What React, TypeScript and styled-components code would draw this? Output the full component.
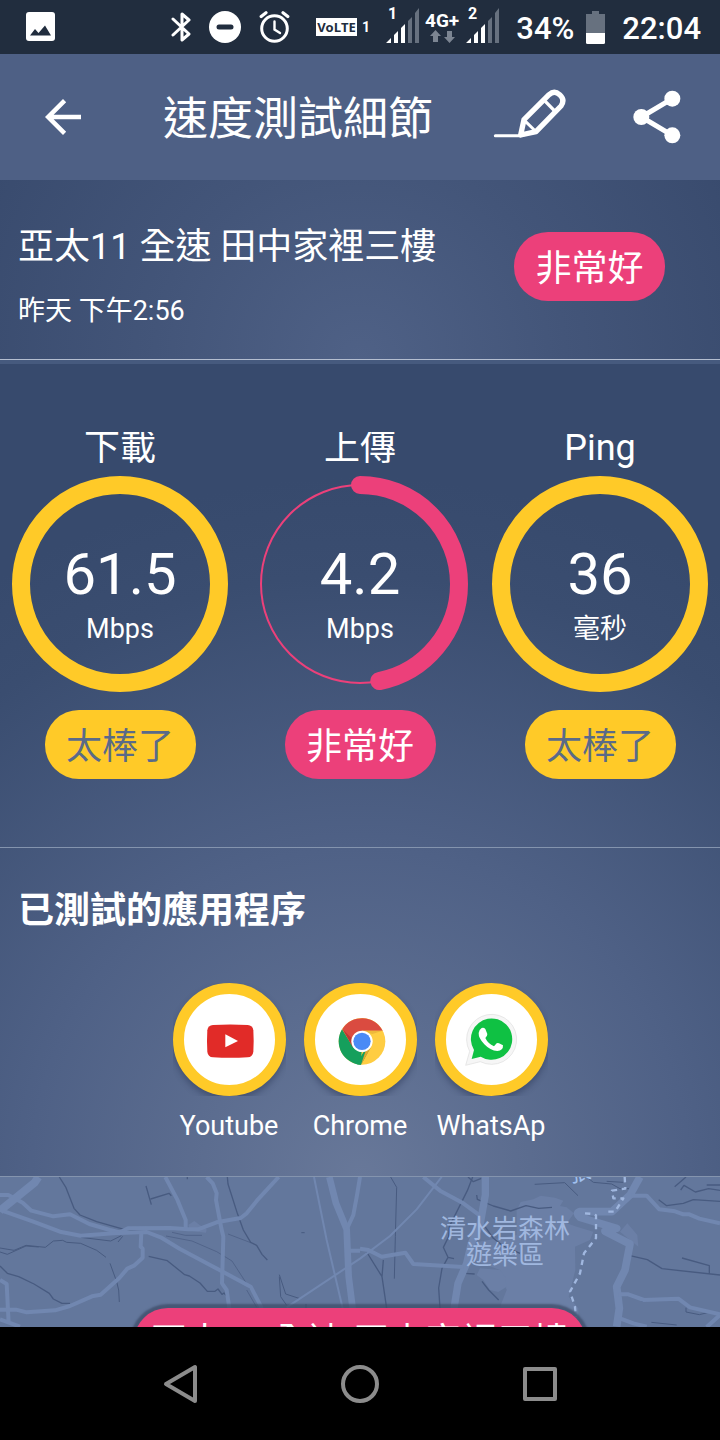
import React from 'react';
import styled, { createGlobalStyle } from 'styled-components';

const YELLOW = '#ffca28';
const PINK = '#ec407a';
const HAIRLINE = '#8494ae';

const GlobalStyle = createGlobalStyle`
  *, *::before, *::after { box-sizing: border-box; }
  body {
    margin: 0;
    background: #000;
    color: #fff;
    font-family: Roboto, "Noto Sans CJK TC", sans-serif;
  }
  h1, h2, h3, p, ul { margin: 0; padding: 0; font-weight: 400; }
  ul { list-style: none; }
  svg { display: block; }
`;

const Screen = styled.div`
  min-height: 100vh;
  display: flex;
  flex-direction: column;
`;

/* ---------- status bar ---------- */

const StatusBar = styled.div`
  height: 54px;
  padding: 0 19px 0 26px;
  display: flex;
  align-items: center;
  justify-content: space-between;
  background: #212d3e;
`;

const StatusGroup = styled.div<{ $gap: number }>`
  display: flex;
  align-items: center;
  gap: ${(p) => p.$gap}px;
`;

const StatusText = styled.span`
  padding-top: 3px;
  font-size: 31px;
  font-weight: 500;
  line-height: 36px;
`;

/* ---------- app bar ---------- */

const AppBar = styled.header`
  height: 126px;
  padding: 0 39px 0 36px;
  display: flex;
  align-items: center;
  background: #4e6085;
`;

const IconButton = styled.button`
  padding: 0;
  border: 0;
  background: none;
  color: inherit;
  cursor: pointer;
`;

const Title = styled.h1`
  flex: 1;
  padding: 6px 0 0 73px;
  font-size: 45px;
  line-height: 54px;
  white-space: nowrap;
`;

const Actions = styled.div`
  display: flex;
  gap: 66px;
`;

/* ---------- summary ---------- */

const Summary = styled.section`
  padding: 46px 55px 32px 18px;
  display: flex;
  align-items: flex-start;
  justify-content: space-between;
  border-bottom: 1px solid #b4bed0;
  background: radial-gradient(circle 410px at 50% 100%, #4f6186, #435579 50%, #394b6e);
`;

const SummaryText = styled.div`
  display: flex;
  flex-direction: column;
  gap: 27px;
`;

const TestName = styled.h2`
  font-size: 36px;
  line-height: 42px;
`;

const TestTime = styled.p`
  font-size: 27px;
  line-height: 32px;
`;

const Badge = styled.span<{ $tone: 'great' | 'good' }>`
  width: 151px;
  height: 69px;
  padding-top: 4px;
  display: flex;
  align-items: center;
  justify-content: center;
  border-radius: 34px;
  font-size: 36px;
  line-height: 42px;
  background: ${(p) => (p.$tone === 'great' ? YELLOW : PINK)};
  color: ${(p) => (p.$tone === 'great' ? '#5a6a88' : '#fff')};
`;

const BadgeSlot = styled.div`
  padding-top: 6px;
`;

/* ---------- results and tested apps ---------- */

const Panels = styled.div`
  border-top: 4px solid #465a7e;
  background: radial-gradient(
    circle 700px at 50% 100%,
    #687899,
    #4f6186 47%,
    #3a4d70 86%,
    #374a6d
  );
`;

const Results = styled.section`
  padding: 68px 0;
  display: grid;
  grid-template-columns: repeat(3, 1fr);
  border-bottom: 1px solid ${HAIRLINE};
`;

const Result = styled.div`
  display: flex;
  flex-direction: column;
  align-items: center;
`;

const ResultLabel = styled.h3`
  height: 32px;
  font-size: 36px;
  line-height: 32px;
  clip-path: inset(0 0 -10px);
`;

const Gauge = styled.div`
  margin: 12px 0 18px;
  display: grid;
  justify-items: center;

  > * { grid-area: 1 / 1; }
`;

const Reading = styled.div`
  padding-top: 68px;
  display: flex;
  flex-direction: column;
  align-items: center;
  gap: 9px;
`;

const Value = styled.span`
  font-size: 58px;
  line-height: 60px;
`;

const Unit = styled.span`
  font-size: 27px;
  line-height: 32px;
`;

const Apps = styled.section`
  padding: 38px 0 34px;
  border-bottom: 1px solid ${HAIRLINE};
`;

const AppsTitle = styled.h2`
  padding-left: 18px;
  font-size: 36px;
  font-weight: 700;
  line-height: 50px;
`;

const AppList = styled.ul`
  padding-top: 47px;
  display: flex;
  justify-content: center;
  gap: 18px;
`;

const AppItem = styled.li`
  width: 113px;
  display: flex;
  flex-direction: column;
  align-items: center;
  gap: 14px;
`;

const AppDiscArea = styled.div`
  overflow: hidden;
`;

const AppDisc = styled.div`
  width: 113px;
  height: 113px;
  display: grid;
  place-items: center;
  border: 11px solid ${YELLOW};
  border-radius: 50%;
  background: #fff;
  box-shadow: 0 4px 6px rgba(30, 40, 70, 0.4);
`;

const AppName = styled.span`
  font-size: 27px;
  line-height: 32px;
  white-space: nowrap;
`;

/* ---------- map ---------- */

const MapView = styled.section`
  position: relative;
  flex: 1 0 150px;
  overflow: hidden;
  background: #63779c;
`;

const MapDrawing = styled.svg`
  position: absolute;
  inset: 0;
  width: 100%;
  height: 100%;
`;

const PlaceName = styled.p`
  position: absolute;
  top: 39px;
  left: 505px;
  transform: translateX(-50%);
  color: #a0b7df;
  font-size: 26px;
  line-height: 26px;
  text-align: center;
  white-space: nowrap;
`;

const MapPin = styled.div`
  position: absolute;
  top: 131px;
  left: 50%;
  transform: translateX(-50%);
  height: 69px;
  padding: 13px 17px;
  border-radius: 34px;
  background: ${PINK};
  box-shadow: 0 0 2px 4px rgba(62, 76, 104, 0.75);
  font-size: 36px;
  line-height: 42px;
  white-space: nowrap;
`;

/* ---------- navigation bar ---------- */

const NavBar = styled.nav`
  height: 113px;
  padding: 0 12.5%;
  display: grid;
  grid-template-columns: repeat(3, 1fr);
  place-items: center;
  background: #000;
`;

/* ---------- drawings ---------- */

const PictureIcon = () => (
  <svg width="30" height="30" viewBox="0 0 30 30">
    <rect x="0" y="0" width="29" height="29" rx="3" fill="#fff" />
    <path d="M4 23.500 9 17l3.500 4 6.500-7.500L25 23.500z" fill="#212d3e" />
  </svg>
);

const BluetoothIcon = () => (
  <svg width="20" height="32" viewBox="0 0 20 32" fill="none" stroke="#fff" strokeWidth="3">
    <path d="M2 8 18 23 11 29V3l7 6L2 24" strokeLinejoin="round" strokeLinecap="round" />
  </svg>
);

const DoNotDisturbIcon = () => (
  <svg width="32" height="32" viewBox="0 0 32 32">
    <circle cx="16" cy="16" r="16" fill="#fff" />
    <rect x="7.500" y="13.500" width="17" height="5" rx="2.500" fill="#212d3e" />
  </svg>
);

const AlarmIcon = () => (
  <svg width="31" height="32" viewBox="0 0 31 32" fill="none" stroke="#fff" strokeLinecap="round">
    <circle cx="15.500" cy="17.500" r="12.800" strokeWidth="3" />
    <path d="M15.500 10.500v8l5.500 3.500" strokeWidth="2.400" />
    <path d="M2.200 5.500 7 1.800M28.800 5.500 24 1.800" strokeWidth="3.200" />
  </svg>
);

const VolteIcon = () => (
  <svg width="53" height="20" viewBox="0 0 53 20">
    <rect x="0" y="1" width="41" height="18" fill="#fff" />
    <text x="20.500" y="15" textAnchor="middle" fontFamily="Open Sans" fontWeight="700" fontSize="13" fill="#212d3e">
      VoLTE
    </text>
    <text x="46" y="15" fontFamily="Roboto" fontWeight="700" fontSize="14" fill="#fff">
      1
    </text>
  </svg>
);

const SignalIcon = ({ sim }: { sim: string }) => (
  <svg width="33" height="38" viewBox="0 0 33 38" overflow="visible">
    <text x="2" y="11" fontFamily="Roboto" fontWeight="700" fontSize="16" fill="#fff">
      {sim}
    </text>
    <path d="M0 35 5 30v5zM8 27l4-4v12H8zM15 20l4-4v19h-4z" fill="#fff" />
    <path d="M22 13l4-4v26h-4zM29 5l4-5v35h-4z" fill="#67717f" />
  </svg>
);

const NetworkIcon = () => (
  <svg width="35" height="38" viewBox="0 0 35 38">
    <text x="0" y="19" fontFamily="Roboto" fontWeight="700" fontSize="19" fill="#fff">
      4G+
    </text>
    <path
      d="M10.500 22l5.500 6H13v6H8v-6H5zM24.500 35l-5.500-6h3v-6h5v6h3z"
      fill="#7c8592"
    />
  </svg>
);

const BatteryIcon = () => (
  <svg width="19" height="33" viewBox="0 0 19 33">
    <path d="M6 0h7v3h6v20H0V3h6z" fill="#67717f" />
    <path d="M0 22h19v9.500q0 1.500-1.500 1.500h-16Q0 33 0 31.500z" fill="#fff" />
  </svg>
);

const BackArrow = () => (
  <svg width="54" height="54" viewBox="0 0 24 24" fill="#fff">
    <path d="M20 11H7.830l5.590-5.590L12 4l-8 8 8 8 1.410-1.410L7.830 13H20z" />
  </svg>
);

const PencilIcon = () => (
  <svg width="74" height="58" viewBox="39 36 222 174" fill="none" stroke="#fff" strokeLinejoin="round" strokeLinecap="round">
    <path d="M46 179H122" strokeWidth="9" />
    <path d="M122 177 132 131 207 56Q223 42 239 56 256 72 243 90L168 167z" strokeWidth="16" />
    <path d="M193 73 223 104" strokeWidth="10" />
    <path d="M134 134 166 165" strokeWidth="9" />
    <path d="M120 180 124 162 140 177z" fill="#fff" strokeWidth="3" />
  </svg>
);

const ShareIcon = () => (
  <svg width="48" height="54" viewBox="459 42 144 162">
    <path d="M577 68 484 123 577 178" fill="none" stroke="#fff" strokeWidth="15" />
    <g fill="#fff">
      <circle cx="577" cy="68" r="24" />
      <circle cx="484" cy="123" r="24" />
      <circle cx="577" cy="178" r="24" />
    </g>
  </svg>
);

const GaugeRing = ({ color, share }: { color: string; share: number }) => {
  const length = 2 * Math.PI * 99;
  return (
    <svg width="216" height="216" viewBox="0 0 216 216" fill="none" stroke={color}>
      <circle cx="108" cy="108" r="99" strokeWidth="2" />
      <circle
        cx="108"
        cy="108"
        r="99"
        strokeWidth="18"
        strokeLinecap="round"
        strokeDasharray={`${length * share} ${length}`}
        transform="rotate(-90 108 108)"
      />
    </svg>
  );
};

const YoutubeLogo = () => (
  <svg width="56" height="56" viewBox="122 124 168 168">
    <path
      d="M158 163Q210 160 262 163 277 164 279 179 281 211 279 243 277 259 262 260 210 263 158 260 143 259 141 243 139 211 141 179 143 164 158 163z"
      fill="#e12b28"
    />
    <path d="M195 191 233 211 195 230z" fill="#fff" />
  </svg>
);

const ChromeLogo = () => (
  <svg width="56" height="56" viewBox="515 124 168 168">
    <circle cx="605" cy="212" r="70" fill="#ffcd42" />
    <path d="M605 212 602 282A70 70 0 0 1 545 176L578 228z" fill="#159f5c" />
    <path d="M605 212 578 228 632 228 602 282Q592 282 588 280L612 240z" fill="#159f5c" />
    <path d="M605 180H667A70 70 0 0 0 546 175L577 229 605 212z" fill="#da4b40" />
    <path d="M546 175 575 224 573 202z" fill="#b63b34" />
    <path d="M602 282 633 228 616 240z" fill="#e2a62f" />
    <path d="M605 180H667L636 190z" fill="#eeb93b" />
    <circle cx="605" cy="212" r="32" fill="#fff" />
    <circle cx="605" cy="212" r="26" fill="#4a8af5" />
  </svg>
);

const WhatsAppLogo = () => (
  <svg width="56" height="56" viewBox="910 124 168 168">
    <path
      d="M918 284 930 242A75 75 0 1 1 962 273z"
      fill="#f6f6f6"
      stroke="#dedede"
      strokeWidth="2"
      strokeLinejoin="round"
    />
    <path d="M936 265 943 238A62 62 0 1 1 963 258z" fill="#0fc143" />
    <path
      d="M966 172Q972 169 977 175L983 190Q984 195 977 202 985 219 1003 227L1011 218Q1014 216 1018 218L1030 224Q1031 240 1013 241 992 240 974 221 956 202 957 187 958 177 966 172z"
      fill="#fff"
    />
  </svg>
);

const MapLines = () => (
  <MapDrawing viewBox="0 51 2160 450" preserveAspectRatio="xMidYMin slice" fill="none" strokeLinejoin="round">
    <g fill="#6b7fa6">
      <path d="M1550 150 1562 126 1600 118 1622 107 1665 113 1690 122 1680 138 1700 142 1722 160 1700 190 1730 200 1780 215 1770 240 1725 260 1726 330 1706 410 1735 445 1735 500H1420L1440 440 1500 440 1520 390 1500 330 1420 300 1410 250 1550 225z" />
      <path d="M1500 330 1515 350 1520 380 1495 396 1470 390 1450 360 1430 345 1440 325z" />
      <path d="M1860 215 1882 190 1912 225 1915 260 1890 240z" />
      <path d="M565 195 583 183 600 196 620 208 618 218 570 212z" />
    </g>
    <g stroke="#485b80" strokeWidth="4">
      <path d="M178 51 198 83 222 145 240 165 290 185 372 208" />
      <path d="M438 78 454 134M452 117 507 100 514 107M562 51V58" />
      <path d="M682 51 684 72 712 160 730 210 752 247 770 256 786 283 802 300" />
      <path d="M0 264 42 271 78 256 136 262 160 243 188 241 200 247 242 250 290 271 318 292" strokeWidth="3" />
      <path d="M0 276 22 283 78 258 116 261" strokeWidth="3" />
      <path d="M0 318 22 340 56 350 102 372 148 400 160 417 186 430H210" />
      <path d="M242 232 332 243 364 227M368 229 354 246" strokeWidth="3" />
      <path d="M330 310 350 365 356 390 358 426" strokeWidth="3" />
      <path d="M446 289 502 302 554 344 568 348 600 369 622 394H645L654 387 666 403 672 399 678 406" />
      <path d="M498 228 576 243 650 275 696 303 738 368 790 445M740 390 770 442" strokeWidth="2" />
      <path d="M516 217 556 226H606M684 222 752 248M388 212 430 210" strokeWidth="2" />
      <path d="M838 344 857 402 900 416M838 350 842 410 860 436M904 218H914M918 432V445" strokeWidth="3" />
      <path d="M1172 51 1190 82 1186 230 1183 356" strokeWidth="3" />
      <path d="M1418 51 1402 92 1348 200 1346 230 1330 262 1344 292 1326 325 1316 384 1320 445M1344 292 1362 296" />
      <path d="M1404 51 1420 65 1444 55M1430 105 1432 118 1480 138 1532 153 1578 137 1616 145 1656 142" />
      <path d="M1604 73 1694 68 1734 107M1760 51 1780 67 1835 72 1860 86 1888 86M1820 64 1870 67" strokeWidth="3" />
      <path d="M1455 200 1480 235 1510 258 1560 280M1446 364 1466 390 1496 420M1395 340 1424 342" />
      <path d="M1100 276 1146 350 1160 445M1150 300 1146 350" />
      <path d="M1976 119 2000 137 2050 130 2080 119 2160 124M2024 80 2058 51M2042 90 2052 76 2086 96 2126 86 2160 91M2120 75H2160" />
      <path d="M1890 287 1942 299 1986 326 2160 345M2046 294 2128 317V342" />
      <path d="M2058 443V456L2098 464 2130 456 2160 462M1954 487 2030 495M1925 424H1940" strokeWidth="3" />
    </g>
    <g stroke="#7187b0" strokeWidth="12">
      <path d="M0 105H25L68 128 94 152 160 169 210 163 268 192 330 210 360 217 384 205 510 204 566 208H594L650 187 722 174 740 160 774 118 836 51" />
      <path d="M0 150 98 184 180 215 242 227 340 220 440 216 482 232 540 267 640 320 752 380 786 445" />
      <path d="M115 51 104 68 0 152" strokeWidth="24" />
      <path d="M496 51 532 119 557 180V206M620 51 638 70 650 100 648 120 664 205 670 230 666 370 680 390 688 445" />
      <path d="M424 216 422 260 428 266V293L402 317 382 326 358 354 302 404 276 409 210 438 165 451 80 457 48 449H0M0 360 20 372 26 490M0 478 60 500" />
      <path d="M988 51 1008 130 1040 208 1046 350 1058 445" strokeWidth="20" />
      <path d="M1080 51 1072 100 1060 165 1040 208M1050 272H1080" />
      <path d="M942 51 980 240 1028 445M860 442 1080 296 1170 228 1250 148 1325 51" strokeWidth="6" />
      <path d="M1270 51 1320 92 1390 130 1440 167" />
      <path d="M1456 51 1456 105 1440 195 1414 250 1400 310 1374 370 1362 445" strokeWidth="22" />
      <path d="M1080 266 1105 270 1145 290 1216 278 1240 312 1390 321" />
      <path d="M1920 51 1890 105 1836 155 1738 155Q1726 160 1740 172L1850 205 1815 214 1890 252 1875 330 1850 380 1858 445 1850 500" strokeWidth="23" />
      <path d="M1895 107H1940L1978 148 2025 154 2050 163H2068L2098 176 2160 190M1855 403H1885L1932 420 2035 416 2070 442 2160 463M1860 475 1900 490 1940 500M2120 501 2160 465" />
    </g>
    <path
      d="M1874 51 1876 86 1836 92 1840 115H1870L1845 155 1812 155M1755 160 1780 162 1788 166V234L1752 280 1740 340 1710 395 1725 440 1727 470"
      stroke="#a0b7df"
      strokeWidth="7"
      strokeDasharray="16 14"
    />
    <text x="1712" y="68" transform="rotate(-14 1712 68)" fill="#a0c0ee" fontFamily="Noto Sans CJK TC" fontSize="66">
      張
    </text>
  </MapDrawing>
);

const NavIcon = ({ children }: { children: React.ReactNode }) => (
  <svg width="40" height="40" viewBox="0 0 40 40" fill="none" stroke="#8c8c8c" strokeWidth="4" strokeLinejoin="round">
    {children}
  </svg>
);

/* ---------- data ---------- */

const TEST_NAME = '亞太11 全速 田中家裡三樓';

type Tone = 'great' | 'good';

const results: { label: string; value: string; unit: string; share: number; tone: Tone; rating: string }[] = [
  { label: '下載', value: '61.5', unit: 'Mbps', share: 1, tone: 'great', rating: '太棒了' },
  { label: '上傳', value: '4.2', unit: 'Mbps', share: 0.468, tone: 'good', rating: '非常好' },
  { label: 'Ping', value: '36', unit: '毫秒', share: 1, tone: 'great', rating: '太棒了' },
];

const apps = [
  { name: 'Youtube', Logo: YoutubeLogo },
  { name: 'Chrome', Logo: ChromeLogo },
  { name: 'WhatsAp', Logo: WhatsAppLogo },
];

export default function App() {
  return (
    <Screen lang="zh-Hant">
      <GlobalStyle />
      <StatusBar>
        <PictureIcon />
        <StatusGroup $gap={12}>
          <StatusGroup $gap={26}>
            <StatusGroup $gap={18}>
              <BluetoothIcon />
              <DoNotDisturbIcon />
              <AlarmIcon />
            </StatusGroup>
            <StatusGroup $gap={17}>
              <VolteIcon />
              <StatusGroup $gap={6}>
                <SignalIcon sim="1" />
                <NetworkIcon />
                <SignalIcon sim="2" />
              </StatusGroup>
              <StatusText>34%</StatusText>
            </StatusGroup>
          </StatusGroup>
          <StatusGroup $gap={17}>
            <BatteryIcon />
            <StatusText>22:04</StatusText>
          </StatusGroup>
        </StatusGroup>
      </StatusBar>

      <AppBar>
        <IconButton aria-label="返回">
          <BackArrow />
        </IconButton>
        <Title>速度測試細節</Title>
        <Actions>
          <IconButton aria-label="編輯">
            <PencilIcon />
          </IconButton>
          <IconButton aria-label="分享">
            <ShareIcon />
          </IconButton>
        </Actions>
      </AppBar>

      <Summary>
        <SummaryText>
          <TestName>{TEST_NAME}</TestName>
          <TestTime>昨天 下午2:56</TestTime>
        </SummaryText>
        <BadgeSlot>
          <Badge $tone="good">非常好</Badge>
        </BadgeSlot>
      </Summary>

      <Panels>
        <Results>
          {results.map((r) => (
            <Result key={r.label}>
              <ResultLabel>{r.label}</ResultLabel>
              <Gauge>
                <GaugeRing color={r.tone === 'great' ? YELLOW : PINK} share={r.share} />
                <Reading>
                  <Value>{r.value}</Value>
                  <Unit>{r.unit}</Unit>
                </Reading>
              </Gauge>
              <Badge $tone={r.tone}>{r.rating}</Badge>
            </Result>
          ))}
        </Results>
        <Apps>
          <AppsTitle>已測試的應用程序</AppsTitle>
          <AppList>
            {apps.map(({ name, Logo }) => (
              <AppItem key={name}>
                <AppDiscArea>
                  <AppDisc>
                    <Logo />
                  </AppDisc>
                </AppDiscArea>
                <AppName>{name}</AppName>
              </AppItem>
            ))}
          </AppList>
        </Apps>
      </Panels>

      <MapView>
        <MapLines />
        <PlaceName>
          清水岩森林
          <br />
          遊樂區
        </PlaceName>
        <MapPin>{TEST_NAME}</MapPin>
      </MapView>

      <NavBar>
        <IconButton aria-label="上一頁">
          <NavIcon>
            <path d="M6 20 35 3V37z" />
          </NavIcon>
        </IconButton>
        <IconButton aria-label="主畫面">
          <NavIcon>
            <circle cx="20" cy="20" r="17" />
          </NavIcon>
        </IconButton>
        <IconButton aria-label="最近使用">
          <NavIcon>
            <rect x="5" y="5" width="30" height="30" />
          </NavIcon>
        </IconButton>
      </NavBar>
    </Screen>
  );
}
